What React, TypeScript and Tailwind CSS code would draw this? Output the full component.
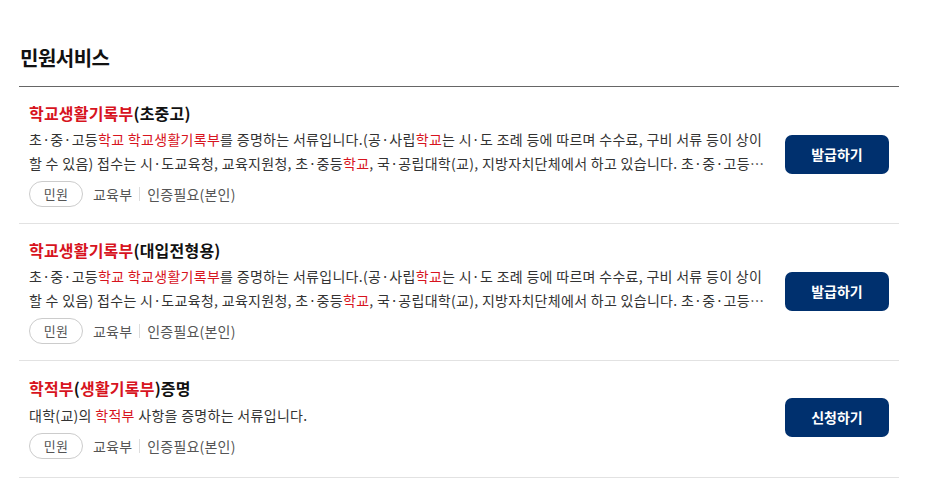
import React from "react";

type Part = { t: string; red?: boolean };

const longDesc: Part[] = [
  { t: "초·중·고등" },
  { t: "학교", red: true },
  { t: " " },
  { t: "학교생활기록부", red: true },
  { t: "를 증명하는 서류입니다.(공·사립" },
  { t: "학교", red: true },
  { t: "는 시·도 조례 등에 따르며 수수료, 구비 서류 등이 상이할 수 있음) 접수는 시·도교육청, 교육지원청, 초·중등" },
  { t: "학교", red: true },
  { t: ", 국·공립대학(교), 지방자치단체에서 하고 있습니다. 초·중·고등학교 학교생활기록부를 증명하는 서류입니다." },
];

const items: { title: Part[]; desc: Part[]; btn: string; short?: boolean }[] = [
  {
    title: [{ t: "학교생활기록부", red: true }, { t: "(초중고)" }],
    desc: longDesc,
    btn: "발급하기",
  },
  {
    title: [{ t: "학교생활기록부", red: true }, { t: "(대입전형용)" }],
    desc: longDesc,
    btn: "발급하기",
  },
  {
    title: [
      { t: "학적부", red: true },
      { t: "(" },
      { t: "생활기록부", red: true },
      { t: ")증명" },
    ],
    desc: [{ t: "대학(교)의 " }, { t: "학적부", red: true }, { t: " 사항을 증명하는 서류입니다." }],
    btn: "신청하기",
    short: true,
  },
];

function Parts({ parts }: { parts: Part[] }) {
  return (
    <>
      {parts.map((p, i) =>
        p.red ? (
          <span key={i} className="text-[#d7141e]">
            {p.t}
          </span>
        ) : (
          <span key={i}>{p.t}</span>
        )
      )}
    </>
  );
}

export default function App() {
  return (
    <div
      className="w-[947px] h-[496px] bg-white pl-[19px] pr-[48px] pt-[44px]"
      style={{ fontFamily: '"Noto Sans CJK KR", "Noto Sans", sans-serif' }}
    >
      <h2 className="text-[20px] font-bold text-[#111] leading-[28px] pl-px tracking-[-0.5px]">민원서비스</h2>
      <div className="mt-[14px] border-t border-[#666]">
        {items.map((it, idx) => (
          <div
            key={idx}
            className={
              it.short
                ? "flex items-center border-b border-[#e2e2e2] pl-[10px] pr-[10px] pt-[15px] pb-[18px]"
                : "flex items-center border-b border-[#e2e2e2] pl-[10px] pr-[10px] pt-[14px] pb-[16px]"
            }
          >
            <div className="flex-1 min-w-0">
              <div className="text-[16px] font-bold leading-[24px] text-[#111] tracking-[0.2px]">
                <Parts parts={it.title} />
              </div>
              <p
                className={
                  it.short
                    ? "mt-[3px] text-[14px] leading-[24px] text-[#333] line-clamp-2 tracking-[0.3px] w-[736px]"
                    : "mt-[2px] text-[14px] leading-[24px] text-[#333] line-clamp-2 tracking-[0.3px] w-[736px]"
                }
              >
                <Parts parts={it.desc} />
              </p>
              <div className="mt-[6px] flex items-center text-[14px] leading-[20px] text-[#555] tracking-[0.2px]">
                <span className="inline-flex items-center justify-center w-[54px] h-[26px] rounded-full border border-[#ccc] text-[13px] text-[#555]">
                  민원
                </span>
                <span className="ml-[10px]">교육부</span>
                <span className="mx-[7px] h-[14px] w-px bg-[#ddd]" />
                <span>인증필요(본인)</span>
              </div>
            </div>
            <button className="w-[104px] h-[39px] rounded-[7px] bg-[#00306e] text-white text-[14px] font-bold shrink-0">
              {it.btn}
            </button>
          </div>
        ))}
      </div>
    </div>
  );
}
